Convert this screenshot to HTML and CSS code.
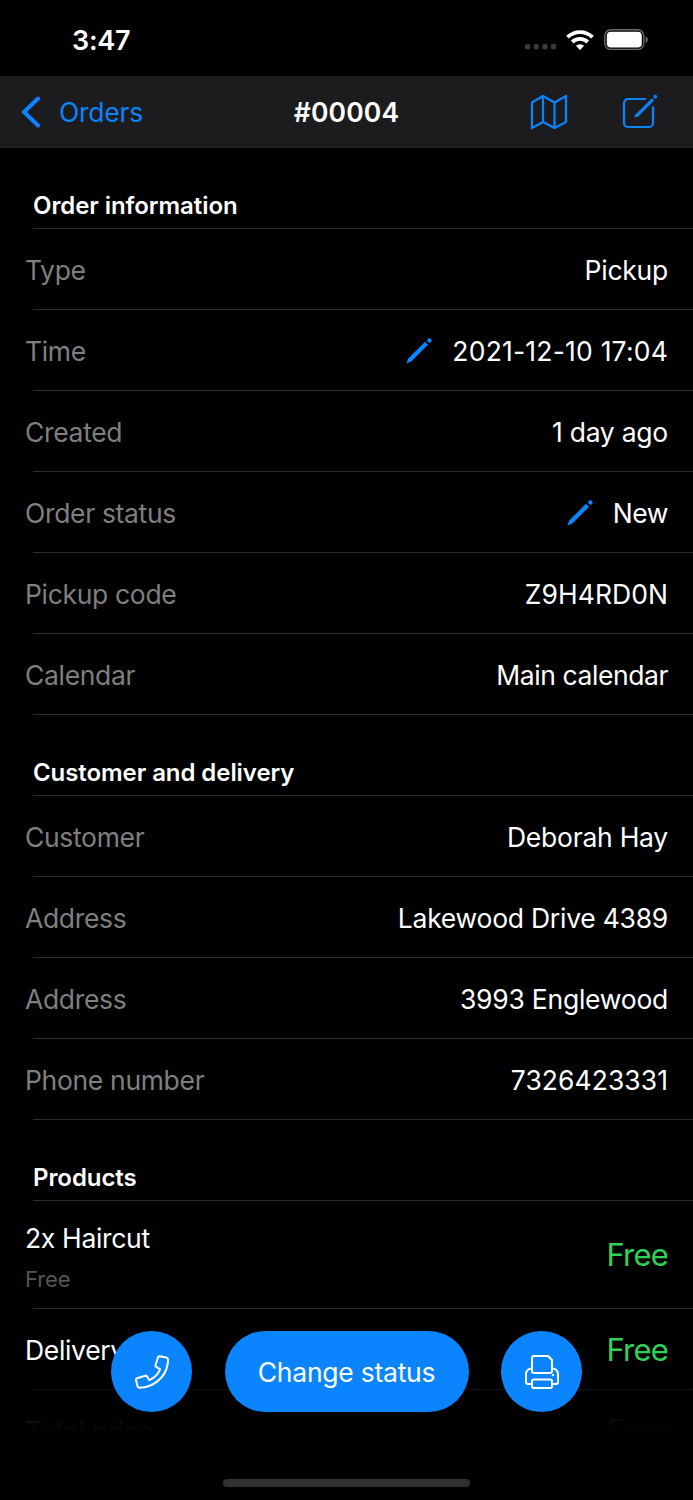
FILE: index.html
```html
<!DOCTYPE html>
<html lang="en">
<head>
    <meta charset="UTF-8">
    <meta name="viewport" content="width=device-width, initial-scale=1.0">
    <title>Order #00004</title>
    <link rel="stylesheet" href="styles.css">
</head>
<body>

    <div class="status-bar">
        <div class="clock">3:47</div>
        <div class="status-icons">
            <svg width="32" height="6" viewBox="0 0 32 6" fill="#3a3a3a">
                <rect x="0" y="0" width="5.4" height="5.4" rx="1.8"/>
                <rect x="8.6" y="0" width="5.4" height="5.4" rx="1.8"/>
                <rect x="17.2" y="0" width="5.4" height="5.4" rx="1.8"/>
                <rect x="25.8" y="0" width="5.4" height="5.4" rx="1.8"/>
            </svg>
            <svg class="wifi" width="28" height="20" viewBox="0 0 28 20" fill="none" stroke="#fff" stroke-width="3.8">
                <path d="M1.5 7.2a18 18 0 0 1 25 0"/>
                <path d="M6.2 12a11.4 11.4 0 0 1 15.6 0"/>
                <path d="M14 20l-4.1-4.2a6 6 0 0 1 8.2 0z" fill="#fff" stroke="none"/>
            </svg>
            <svg class="battery" width="45" height="22" viewBox="0 0 45 22">
                <rect x="0.8" y="0.8" width="39" height="19.6" rx="6" fill="none" stroke="#6b6b6b" stroke-width="1.4"/>
                <rect x="2.8" y="2.8" width="35" height="15.6" rx="4" fill="#fff"/>
                <path d="M41.6 7.5c3 1 3 5.4 0 6.4z" fill="#6b6b6b"/>
            </svg>
        </div>
    </div>

    <div class="navbar">
        <div class="back">
            <svg width="20" height="32" viewBox="0 0 20 32" fill="none" stroke="#0a84ff" stroke-width="4" stroke-linecap="round" stroke-linejoin="round">
                <path d="M17 2.5L3 16l14 13.5"/>
            </svg>
            <span>Orders</span>
        </div>
        <div class="title">#00004</div>
        <div class="nav-actions">
            <svg width="38" height="36" viewBox="0 0 38 36" fill="none" stroke="#0a84ff" stroke-width="2.2" stroke-linejoin="round">
                <path d="M2 8.5L13 2l11.5 6.5L36 2v26l-11.5 6L13 28 2 34z"/>
                <path d="M13 2v26M24.5 8.5V34"/>
            </svg>
            <svg width="36" height="36" viewBox="0 0 36 36" fill="none" stroke="#0a84ff" stroke-width="2.2">
                <path d="M24 5H6a4 4 0 0 0-4 4v20a4 4 0 0 0 4 4h21a4 4 0 0 0 4-4V12.5"/>
                <path d="M15 21.3L31 5.3" stroke-width="3.2"/>
                <path d="M13 23l1-3 2 2z" fill="#0a84ff" stroke-width="1"/>
                <circle cx="33.3" cy="2.7" r="1.9" fill="#0a84ff" stroke="none"/>
            </svg>
        </div>
    </div>

    <div class="content">
        <div class="section-title">Order information</div>
        <div class="row">
            <span class="label">Type</span>
            <span class="value">Pickup</span>
        </div>
        <div class="row">
            <span class="label">Time</span>
            <svg class="pencil" width="26" height="26" viewBox="0 0 26 26" fill="#0a84ff">
                <path d="M0.3 25.5L2.2 20.5 19 3.8l3 3L5.3 23.6z"/>
                <circle cx="23.4" cy="2.5" r="2.2"/>
            </svg>
            <span class="value date">2021-12-10 17:04</span>
        </div>
        <div class="row">
            <span class="label">Created</span>
            <span class="value">1 day ago</span>
        </div>
        <div class="row">
            <span class="label">Order status</span>
            <svg class="pencil" width="26" height="26" viewBox="0 0 26 26" fill="#0a84ff">
                <path d="M0.3 25.5L2.2 20.5 19 3.8l3 3L5.3 23.6z"/>
                <circle cx="23.4" cy="2.5" r="2.2"/>
            </svg>
            <span class="value short">New</span>
        </div>
        <div class="row">
            <span class="label">Pickup code</span>
            <span class="value code">Z9H4RD0N</span>
        </div>
        <div class="row">
            <span class="label">Calendar</span>
            <span class="value short">Main calendar</span>
        </div>

        <div class="section-title">Customer and delivery</div>
        <div class="row">
            <span class="label">Customer</span>
            <span class="value">Deborah Hay</span>
        </div>
        <div class="row">
            <span class="label">Address</span>
            <span class="value">Lakewood Drive 4389</span>
        </div>
        <div class="row">
            <span class="label">Address</span>
            <span class="value">3993 Englewood</span>
        </div>
        <div class="row">
            <span class="label">Phone number</span>
            <span class="value code">7326423331</span>
        </div>

        <div class="section-title">Products</div>
        <div class="row product">
            <div class="label name">2x Haircut<small>Free</small></div>
            <span class="value price">Free</span>
        </div>
        <div class="row">
            <span class="label name">Delivery</span>
            <span class="value price">Free</span>
        </div>
        <div class="row">
            <span class="label name">Total price</span>
            <span class="value price">Free</span>
        </div>
    </div>

    <!-- floating buttons over the fading end of the list -->
    <div class="footer">
        <div class="actions">
            <button class="round">
                <svg width="34" height="34" viewBox="0 0 34 34" fill="none" stroke="#fff" stroke-width="2" stroke-linejoin="round">
                    <path d="M24.3 1.3L31.5 2.6C33.8 2.9 33 7 32.4 10.2 30 23 18 32.3 4.6 32.8 2.8 32.9 2.5 31.5 2.3 30.2L1 24.7Q0.9 23.6 2 23.3L10.2 20.7Q11.3 20.4 11.9 21.3L14.4 25.2Q22 21.5 25.1 14.3L21 11.7Q20.2 11.1 20.5 10.2L23 2.2Q23.4 1.2 24.3 1.3z"/>
                </svg>
            </button>
            <button class="change">Change status</button>
            <button class="round">
                <svg width="34" height="34" viewBox="0 0 34 34" fill="none" stroke="#fff" stroke-width="2" stroke-linejoin="round">
                    <path d="M9 1h14l4 4v11a2 2 0 0 1-2 2H9a2 2 0 0 1-2-2V3a2 2 0 0 1 2-2z"/>
                    <path d="M7 13.5H6.500a5.500 5.500 0 0 0-5.500 5.500v8a2 2 0 0 0 2 2h4M27 13.500h.5a5.500 5.500 0 0 1 5.500 5.500v8a2 2 0 0 1-2 2h-4"/>
                    <rect x="7" y="24.5" width="20" height="8.5" rx="1.8"/>
                    <circle cx="28" cy="20" r="1.3" fill="#fff" stroke="none"/>
                </svg>
            </button>
        </div>
        <div class="home-bar"></div>
    </div>

</body>
</html>
```
FILE: styles.css
```css
* {
    box-sizing: border-box;
}
body {
    margin: 0;
    width: 693px;
    height: 1500px;
    overflow: hidden;
    position: relative;
    background-color: #000;
    color: #fff;
    font-family: Inter, "Liberation Sans", sans-serif;
    font-size: 26.5px;
    letter-spacing: -0.25px;
}
.status-bar {
    display: flex;
    justify-content: space-between;
    height: 76px;
    padding: 3px 44px 0 72px;
    align-items: center;
}
.clock {
    padding-top: 2px;
    font-size: 27px;
    font-weight: 600;
}
.status-icons {
    display: flex;
    align-items: flex-end;
}
.status-icons svg {
    display: block;
}
.status-icons .wifi {
    margin: 0 10px 1px 9px;
}
.status-icons svg:first-child {
    margin-bottom: 1px;
}
.navbar {
    display: grid;
    grid-template-columns: 1fr auto 1fr;
    align-items: center;
    height: 72px;
    padding: 0 35px 0 21px;
    background-color: #1c1c1e;
    border-bottom: 1px solid #262628;
}
.back {
    display: flex;
    align-items: center;
    gap: 18px;
    color: #0a84ff;
}
.title {
    margin-left: 14px;
    font-weight: 600;
    letter-spacing: 0.15px;
}
.nav-actions {
    display: flex;
    justify-content: flex-end;
    gap: 54px;
}
.section-title {
    height: 81px;
    margin-left: 33px;
    padding-top: 42px;
    border-bottom: 1px solid #2c2c2e;
    font-size: 24px;
    line-height: 32px;
    font-weight: 600;
    letter-spacing: -0.07px;
}
.row {
    display: flex;
    align-items: center;
    height: 81px;
    margin-left: 33px;
    padding: 1px 25px 0 0;
    border-bottom: 1px solid #2c2c2e;
}
.label {
    margin-left: -8px;
    margin-right: auto;
    color: #7f7f7f;
    letter-spacing: -0.33px;
}
.date {
    letter-spacing: 0.2px;
}
.code {
    letter-spacing: 0.05px;
}
.short {
    letter-spacing: -0.42px;
}
.pencil {
    margin-right: 20px;
}
.product {
    height: 108px;
    padding-top: 0;
}
.name {
    color: #fff;
}
.product .name {
    padding-top: 5px;
}
.name small {
    display: block;
    margin-top: 12px;
    color: #555;
    font-size: 22px;
    line-height: 26px;
    letter-spacing: -0.1px;
}
.price {
    color: #30d158;
    font-size: 31px;
    letter-spacing: -0.8px;
}
.footer {
    position: absolute;
    left: 0;
    right: 0;
    bottom: 0;
    height: 170px;
    display: flex;
    flex-direction: column;
    align-items: center;
    justify-content: space-between;
    padding: 1px 0 13px;
    background: linear-gradient(rgba(0, 0, 0, 0) 30px, rgba(0, 0, 0, 0.6) 59px, rgba(0, 0, 0, 0.92) 88px, rgba(0, 0, 0, 0.97) 96px, #000 106px);
}
.actions {
    display: flex;
    gap: 32.5px;
}
button {
    display: flex;
    align-items: center;
    justify-content: center;
    height: 81px;
    padding: 0;
    border: none;
    border-radius: 41px;
    background-color: #0a84ff;
    color: #fff;
    font: inherit;
    letter-spacing: inherit;
}
.round {
    width: 81px;
}
.change {
    width: 244px;
}
.home-bar {
    width: 247px;
    height: 8px;
    border-radius: 4px;
    background-color: #303030;
}
```
